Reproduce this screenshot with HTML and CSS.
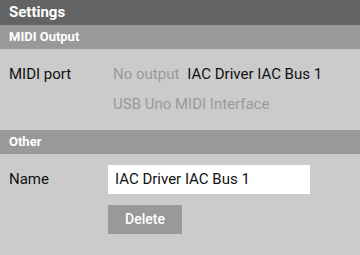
FILE: index.html
```html
<!DOCTYPE html>
<html>
<head>
<meta charset="utf-8">
<link rel="stylesheet" href="styles.css">
</head>
<body>
<div class="app">
  <div class="titlebar">Settings</div>
  <div class="section-head">MIDI Output</div>
  <div class="row port-row">
    <div class="label">MIDI port</div>
    <div class="options">
      <div class="opt-line">
        <span class="opt muted">No output</span>
        <span class="opt">IAC Driver IAC Bus 1</span>
      </div>
      <div class="opt-line">
        <span class="opt muted">USB Uno MIDI Interface</span>
      </div>
    </div>
  </div>
  <div class="section-head">Other</div>
  <div class="row name-row">
    <div class="label">Name</div>
    <div class="field-col">
      <div class="input">IAC Driver IAC Bus 1</div>
      <div class="btn">Delete</div>
    </div>
  </div>
</div>
</body>
</html>
```
FILE: styles.css
```css
html, body {
  margin: 0;
  padding: 0;
  background: #cbcbcb;
}
.app {
  width: 360px;
  height: 255px;
  background: #cbcbcb;
  font-family: Roboto, "Liberation Sans", sans-serif;
  color: #111;
  overflow: hidden;
}
.titlebar {
  height: 25px;
  background: #636363;
  color: #fff;
  font-weight: 700;
  font-size: 15px;
  line-height: 25px;
  padding-left: 9px;
}
.section-head {
  height: 24px;
  background: #999999;
  color: #fff;
  font-weight: 700;
  font-size: 13px;
  line-height: 24px;
  padding-left: 9px;
}
.row {
  display: flex;
}
.label {
  width: 104px;
  padding-left: 9px;
  font-size: 15px;
}
.port-row {
  padding-top: 16px;
  height: 81px;
  box-sizing: border-box;
}
.port-row .label {
  line-height: 18px;
}
.options {
  display: flex;
  flex-direction: column;
  gap: 12px;
}
.opt-line {
  display: flex;
  gap: 8px;
  font-size: 15px;
  line-height: 18px;
}
.muted {
  color: #9a9a9a;
}
.name-row {
  padding-top: 11px;
}
.name-row .label {
  width: 99px;
  line-height: 29px;
}
.field-col {
  display: flex;
  flex-direction: column;
  gap: 11px;
}
.input {
  width: 202px;
  height: 29px;
  box-sizing: border-box;
  background: #fff;
  font-size: 15px;
  line-height: 29px;
  padding-left: 7px;
}
.btn {
  width: 74px;
  height: 29px;
  background: #999999;
  color: #fff;
  font-size: 14px;
  font-weight: 500;
  line-height: 29px;
  text-align: center;
}
```
